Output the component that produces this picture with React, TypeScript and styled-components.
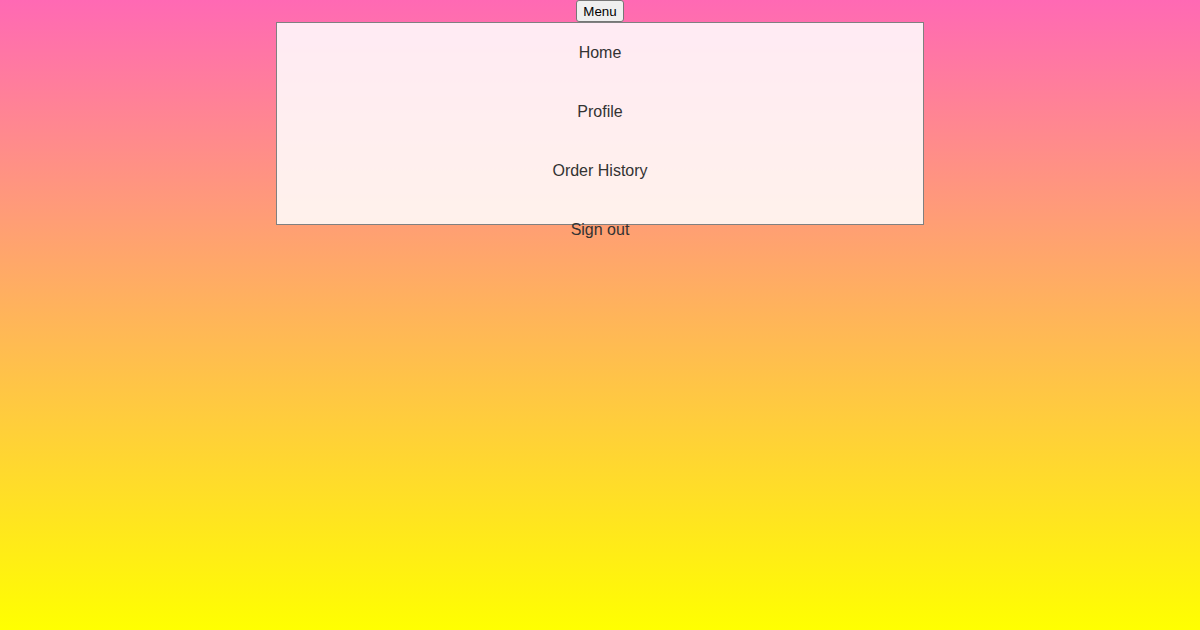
import React, { useState } from 'react';
import styled, { createGlobalStyle } from 'styled-components';

const GlobalStyle = createGlobalStyle`
	html,
	body {
		margin: 0;
		padding: 0;
	}

	body {
		min-height: 100vh;
		font-family: 'Liberation Sans', Arial, sans-serif;
		background: linear-gradient(to bottom, #ff69b4, #ffff00);
		background-attachment: fixed;
	}
`;

const Page = styled.div`
	width: 100%;
	min-height: 100vh;
	display: flex;
	flex-direction: column;
	align-items: center;
`;

const MenuButton = styled.button`
	height: 22px;
	padding: 1px 6px;
	font-family: 'Liberation Sans', Arial, sans-serif;
	font-size: 13.33px;
	color: #000;
	background-color: #efefef;
	border: 1px solid #767676;
	border-radius: 3px;
	cursor: pointer;
`;

const MenuPanel = styled.ul`
	width: 646px;
	height: 201px;
	margin: 0;
	padding: 0;
	list-style: none;
	background-color: rgba(255, 255, 255, 0.86);
	border: 1px solid #808080;
`;

const MenuItem = styled.li`
	padding: 20px 0;
	font-size: 16px;
	line-height: 19px;
	color: #333;
	text-align: center;
	cursor: pointer;
`;

const items = ['Home', 'Profile', 'Order History', 'Sign out'];

const App = () => {
	const [open, setOpen] = useState(true);

	return (
		<Page>
			<GlobalStyle />
			<MenuButton type="button" onClick={() => setOpen(!open)}>
				Menu
			</MenuButton>
			{open && (
				<MenuPanel>
					{items.map(item => (
						<MenuItem key={item}>{item}</MenuItem>
					))}
				</MenuPanel>
			)}
		</Page>
	);
};

export default App;
